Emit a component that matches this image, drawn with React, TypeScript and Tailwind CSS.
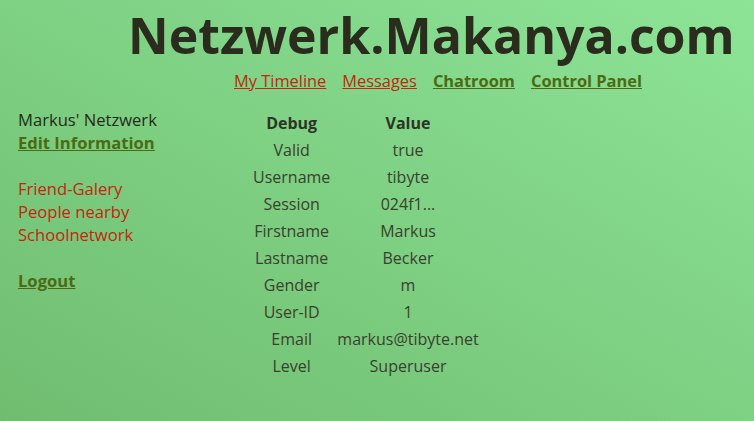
export default function App() {
  const rows: [string, string][] = [
    ["Valid", "true"],
    ["Username", "tibyte"],
    ["Session", "024f1..."],
    ["Firstname", "Markus"],
    ["Lastname", "Becker"],
    ["Gender", "m"],
    ["User-ID", "1"],
    ["Email", "markus@tibyte.net"],
    ["Level", "Superuser"],
  ]

  return (
    <div
      className="w-[754px] h-[421px] overflow-hidden bg-gradient-to-tr from-[#70bd70] to-[#8de497] text-[#3a402e] text-[16px]"
      style={{ fontFamily: '"Open Sans", sans-serif' }}
    >
      <header className="pl-[128px] pt-[3px]">
        <h1 className="text-[50px] leading-[64px] font-bold text-[#2a2d1d] whitespace-nowrap">Netzwerk.Makanya.com</h1>
        <nav className="flex gap-[16px] pl-[106px] mt-[3px] leading-[22px] text-[16.4px]">
          <a href="#" className="text-[#c4260e] underline">My Timeline</a>
          <a href="#" className="text-[#c4260e] underline">Messages</a>
          <a href="#" className="text-[#4d6a12] font-bold underline">Chatroom</a>
          <a href="#" className="text-[#4d6a12] font-bold underline">Control Panel</a>
        </nav>
      </header>

      <div className="flex mt-[16px]">
        <aside className="w-[249px] shrink-0 pl-[18px] leading-[23px] text-[16.6px]">
          <div className="text-[#252a1c]">Markus' Netzwerk</div>
          <a href="#" className="block text-[#4d6a12] font-bold underline">Edit Information</a>
          <div className="h-[23px]" />
          <a href="#" className="block text-[#c4260e]">Friend-Galery</a>
          <a href="#" className="block text-[#c4260e]">People nearby</a>
          <a href="#" className="block text-[#c4260e]">Schoolnetwork</a>
          <div className="h-[23px]" />
          <a href="#" className="block text-[#4d6a12] font-bold underline">Logout</a>
        </aside>

        <table className="border-separate border-spacing-x-[3px] border-spacing-y-[2px]">
          <thead>
            <tr className="h-[25px]">
              <th className="font-bold text-[#2f3326] px-[1px]">Debug</th>
              <th className="font-bold text-[#2f3326] pl-[3px] pr-[1px]">Value</th>
            </tr>
          </thead>
          <tbody>
            {rows.map(([k, v]) => (
              <tr key={k} className="h-[25px]">
                <td className="text-center px-[1px]">{k}</td>
                <td className="text-center pl-[3px] pr-[1px]">{v}</td>
              </tr>
            ))}
          </tbody>
        </table>
      </div>
    </div>
  )
}
